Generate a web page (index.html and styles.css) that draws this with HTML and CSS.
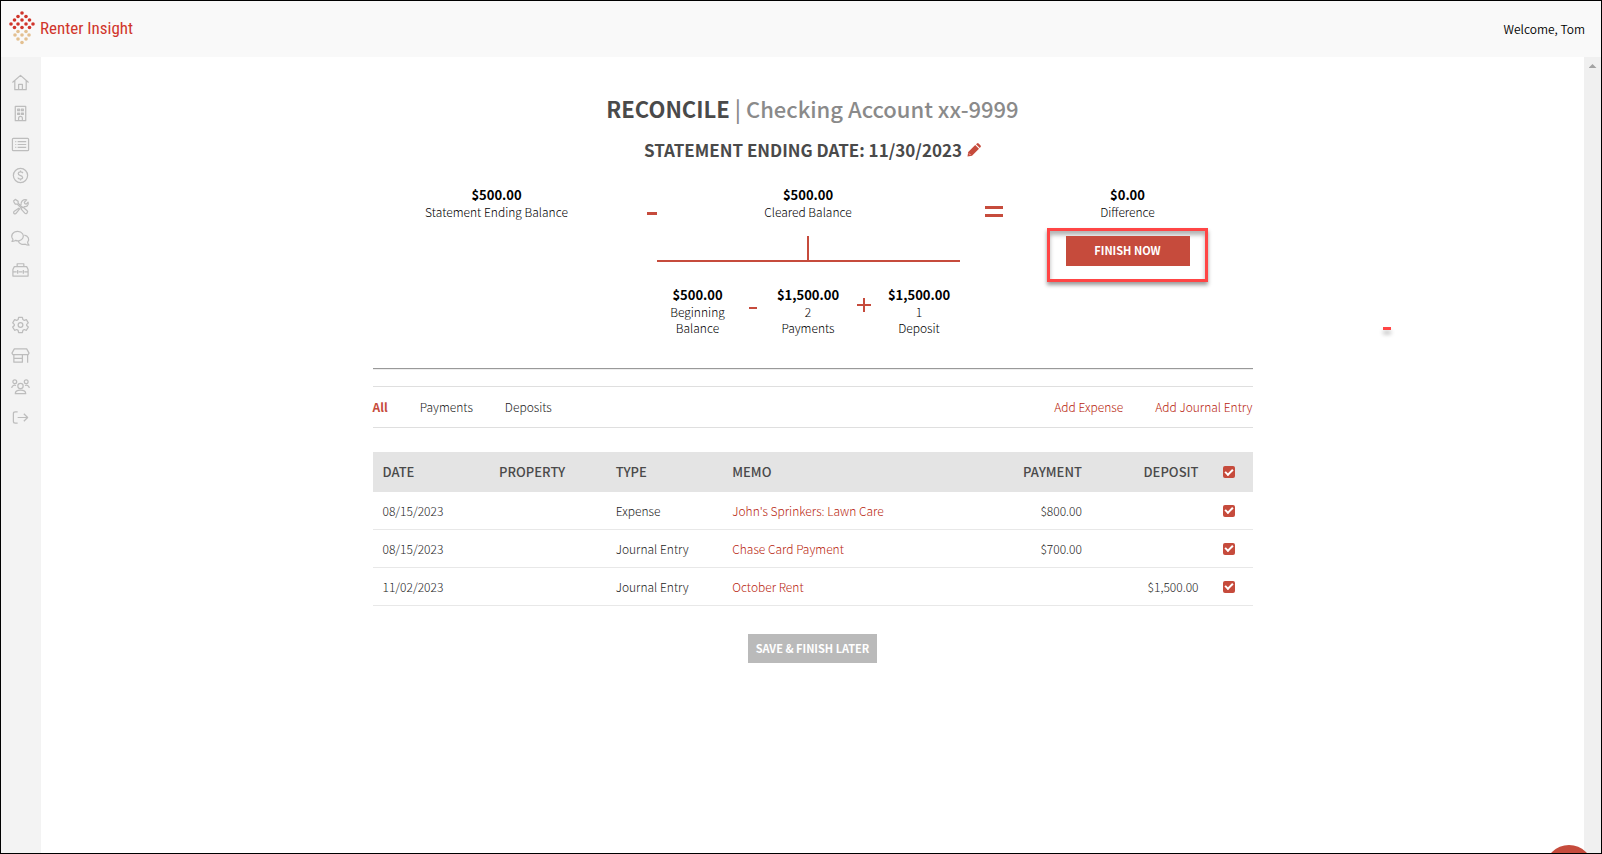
FILE: index.html
```html
<!DOCTYPE html>
<html lang="en">
<head>
<meta charset="utf-8">
<title>Renter Insight - Reconcile</title>
<link rel="stylesheet" href="styles.css">
</head>
<body>
<header class="topbar">
  <a class="brand" href="#">
    <svg class="brand-mark" viewBox="0 0 26 34" width="26" height="34" aria-hidden="true">
      <g fill="#d0352b">
        <circle cx="13" cy="2" r="1.800"/><circle cx="9" cy="5.500" r="1.800"/><circle cx="17" cy="5.500" r="1.800"/>
        <circle cx="5.500" cy="9" r="1.800"/><circle cx="13" cy="9" r="1.800"/><circle cx="20.500" cy="9" r="1.800"/>
        <circle cx="2" cy="13" r="1.800"/><circle cx="9" cy="13" r="1.800"/><circle cx="17" cy="13" r="1.800"/><circle cx="24" cy="13" r="1.800"/>
        <circle cx="5.500" cy="16.500" r="1.800"/><circle cx="13" cy="16.500" r="1.800"/><circle cx="20.500" cy="16.500" r="1.800"/>
      </g>
      <g fill="#e3c091">
        <circle cx="9" cy="20.500" r="1.800"/><circle cx="17" cy="20.500" r="1.800"/>
        <circle cx="6" cy="24" r="1.800"/><circle cx="13" cy="24" r="1.800"/><circle cx="20" cy="24" r="1.800"/>
        <circle cx="9" cy="28" r="1.800"/><circle cx="17" cy="28" r="1.800"/><circle cx="13" cy="31.500" r="1.800"/>
      </g>
    </svg>
    <span class="brand-name">Renter Insight</span>
  </a>
  <span class="welcome">Welcome, Tom</span>
</header>
<div class="shell">
  <nav class="sidebar" aria-label="Main">
    <a href="#" aria-label="Home"><svg viewBox="0 0 20 20"><path d="M1.500 10 10 2.500 18.500 10M4 8v9.500h12V8M8 17.500v-5.500h4v5.500"/></svg></a>
    <a href="#" aria-label="Properties"><svg viewBox="0 0 20 20"><path d="M4.500 2.500h11v15h-11zM8 17.500v-2.500a2 2 0 0 1 4 0v2.500"/><path d="M7 5.500h2v1.500H7zM11 5.500h2v1.500h-2zM7 9.500h2V11H7zM11 9.500h2V11h-2z"/></svg></a>
    <a href="#" aria-label="Listings"><svg viewBox="0 0 20 20"><rect x="1.500" y="3.500" width="17" height="13" rx="1"/><path d="M4.500 7h1M4.500 10h1M4.500 13h1M7 7h9M7 10h9M7 13h9"/></svg></a>
    <a href="#" aria-label="Accounting"><svg viewBox="0 0 20 20"><circle cx="10" cy="10" r="7.500"/><path d="M12.500 7.500C12 6.500 11 6.300 10 6.300c-3 0-3.200 2.900-.5 3.500 3.600.8 3.600 3.900.5 3.900-1.500 0-2.500-.5-2.800-1.500M10 4.800v1.500M10 13.700v1.500"/></svg></a>
    <a href="#" aria-label="Maintenance"><svg viewBox="0 0 20 20"><path d="m2.500 4.500 2-2 3 2v2l4 4M2.500 4.500l2 3h2l4 4M11 12l1.500-1.500 4.500 4c1.500 1.500-1 4-2.500 2.500l-4-4.500zM8.500 11.500l-5 3.500c-2 1.500.5 4 2 2l4-5M10.500 8.500c-.6-4 2.500-6.500 6-5.500L14 5.500l.5 1.500 1.500.5 2-2c1 3-1.500 5.500-4.500 4.500"/></svg></a>
    <a href="#" aria-label="Messages"><svg viewBox="0 0 20 20"><path d="M1 14c1-1 1-2 1-2C-1 8 2 3.500 7 3.500S14 8 12.500 10.500C11 13.500 7 14 5 13c-1 .8-2.500 1.200-4 1zM14 7.500c4 .5 6 4.500 3.500 7.500 0 1 .5 2 1.500 3-1.500 0-3-.3-4-1-3 1-6.500-.3-7.300-3.200"/></svg></a>
    <a href="#" aria-label="Toolbox"><svg viewBox="0 0 20 20"><path d="M3.500 8h13l1.500 3v7H2v-7zM6.500 8V5h7v3M2 13.500h4M8 13.500h4M14 13.500h4M7 11.500v4M13 11.500v4"/></svg></a>
    <a class="group-start" href="#" aria-label="Settings"><svg viewBox="0 0 20 20"><path d="M8 2.500h4l.5 2.300 1.500.9 2.200-.8 2 3.400-1.700 1.600v1.200l1.700 1.600-2 3.400-2.200-.8-1.500.9-.5 2.300H8l-.5-2.300-1.500-.9-2.200.8-2-3.400 1.700-1.600V9.900L1.800 8.300l2-3.400 2.200.8 1.500-.9z"/><circle cx="10" cy="10.500" r="2.500"/></svg></a>
    <a href="#" aria-label="Marketplace"><svg viewBox="0 0 20 20"><path d="M3.500 3h13L19 7.500 18 9H2L1 7.500zM3 9v8h9V9M3 13h9M17.500 9v8.500"/></svg></a>
    <a href="#" aria-label="People"><svg viewBox="0 0 20 20"><circle cx="10" cy="9.500" r="2.800"/><circle cx="4" cy="5" r="2"/><circle cx="16" cy="5" r="2"/><path d="M4.500 17.500c0-5 11-5 11 0zM.800 11.500c0-2 2-3.500 4.500-2.500M19.200 11.500c0-2-2-3.500-4.500-2.500"/></svg></a>
    <a href="#" aria-label="Log out"><svg viewBox="0 0 20 20"><path d="M7 4H4.500C3 4 2.500 4.500 2.500 6v8c0 1.500.5 2 2 2H7M7 10h10.500M13.500 6l4 4-4 4"/></svg></a>
  </nav>
  <main class="content">
    <div class="page">
      <h1 class="title">RECONCILE <span class="account">| Checking Account xx-9999</span></h1>
      <h2 class="subtitle">STATEMENT ENDING DATE: 11/30/2023
        <button class="edit" type="button" aria-label="Edit statement date"><svg viewBox="0 0 14 14" width="14" height="14"><path d="M1.200 9 8.200 2l3.800 3.800-7 7-4.500.7zM9 1.200 10 .4q.8-.6 1.600 0L13.600 2.400q.6.800 0 1.600l-.8 1z" fill="#c64b3c"/><path d="m2 10.500 1.500 1.500" stroke="#fff" stroke-width=".7"/></svg></button>
      </h2>
      <section class="equation">
        <div class="term"><strong>$500.00</strong><span>Statement Ending Balance</span></div>
        <i class="op minus"></i>
        <div class="cleared">
          <div class="term"><strong>$500.00</strong><span>Cleared Balance</span></div>
          <div class="stem"></div>
          <div class="parts">
            <div class="term"><strong>$500.00</strong><span>Beginning</span><span>Balance</span></div>
            <i class="op minus-small"></i>
            <div class="term"><strong>$1,500.00</strong><span>2</span><span>Payments</span></div>
            <i class="op plus"></i>
            <div class="term"><strong>$1,500.00</strong><span>1</span><span>Deposit</span></div>
          </div>
        </div>
        <i class="op equals"></i>
        <div class="term">
          <strong>$0.00</strong><span>Difference</span>
          <div class="finish"><button class="btn primary" type="button">FINISH NOW</button></div>
        </div>
      </section>
      <hr class="rule">
      <div class="filters">
        <a class="active" href="#">All</a><a href="#">Payments</a><a href="#">Deposits</a>
        <a class="link push" href="#">Add Expense</a><a class="link" href="#">Add Journal Entry</a>
      </div>
      <table class="ledger">
        <colgroup><col class="c"><col class="c"><col class="c"><col><col class="c"><col class="c"><col class="tick"></colgroup>
        <thead>
          <tr><th>DATE</th><th>PROPERTY</th><th>TYPE</th><th>MEMO</th><th class="num">PAYMENT</th><th class="num">DEPOSIT</th><th class="check"><input type="checkbox" checked aria-label="Select all"></th></tr>
        </thead>
        <tbody>
          <tr><td>08/15/2023</td><td></td><td>Expense</td><td><a class="link" href="#">John's Sprinkers: Lawn Care</a></td><td class="num">$800.00</td><td></td><td class="check"><input type="checkbox" checked aria-label="John's Sprinkers: Lawn Care"></td></tr>
          <tr><td>08/15/2023</td><td></td><td>Journal Entry</td><td><a class="link" href="#">Chase Card Payment</a></td><td class="num">$700.00</td><td></td><td class="check"><input type="checkbox" checked aria-label="Chase Card Payment"></td></tr>
          <tr><td>11/02/2023</td><td></td><td>Journal Entry</td><td><a class="link" href="#">October Rent</a></td><td></td><td class="num">$1,500.00</td><td class="check"><input type="checkbox" checked aria-label="October Rent"></td></tr>
        </tbody>
      </table>
      <button class="btn later" type="button">SAVE &amp; FINISH LATER</button>
    </div>
    <i class="dash"></i>
  </main>
  <div class="scrollbar"></div>
</div>
<button class="fab" type="button" aria-label="Help"></button>
</body>
</html>
```
FILE: styles.css
```css
* { box-sizing: border-box; }

body {
  margin: 0;
  height: 100vh;
  display: flex;
  flex-direction: column;
  position: relative;
  overflow: hidden;
  border: 1px solid #000;
  background: #fff;
  color: #1c1c1c;
  font: 300 12px/16px "Noto Sans CJK SC", "Open Sans", sans-serif;
}

a { color: inherit; text-decoration: none; }
button { font: inherit; border: 0; padding: 0; cursor: pointer; }

.topbar {
  flex: none;
  height: 56px;
  display: flex;
  align-items: center;
  justify-content: space-between;
  padding: 0 16px 0 8px;
  background: #f9f9f9;
}
.brand { display: flex; align-items: center; gap: 5px; margin-bottom: 2px; }
.brand-name {
  font: 17px/24px "Liberation Sans Narrow", "Roboto Condensed", "Liberation Sans", sans-serif;
  color: #d0352b;
}
.welcome { color: #000; font-weight: 350; }

.shell { flex: 1; min-height: 0; display: flex; }

.sidebar {
  flex: none;
  width: 40px;
  padding: 10px 1px 0 0;
  background: #f3f3f3;
  display: flex;
  flex-direction: column;
}
.sidebar a { height: 31px; display: grid; place-items: center; }
.sidebar .group-start { margin-top: 25px; }
.sidebar svg {
  width: 19px;
  height: 19px;
  fill: none;
  stroke: #bdbdbd;
  stroke-width: 1.3;
  stroke-linejoin: round;
  overflow: visible;
}

.content { flex: 1; position: relative; overflow: hidden; }
.page { max-width: 880px; margin: 0 auto; padding-top: 34px; }

.scrollbar { flex: none; width: 17px; background: #f0f0f0; }
.scrollbar::before {
  content: "";
  display: block;
  margin: 7px auto 0;
  width: 8px;
  height: 4px;
  background: #a3a3a3;
  clip-path: polygon(50% 0, 100% 100%, 0 100%);
}

.title {
  margin: 0;
  text-align: center;
  color: #4a4a4a;
  font-size: 22px;
  line-height: 34px;
  font-weight: 700;
}
.account { color: #8a8a8a; font-weight: 500; }
.subtitle {
  margin: 13px 0 0;
  display: flex;
  justify-content: center;
  align-items: center;
  gap: 5px;
  color: #4a4a4a;
  font-size: 17px;
  line-height: 24px;
  font-weight: 700;
}
.edit { background: none; display: flex; }

.equation {
  margin-top: 24px;
  display: grid;
  grid-template-columns: 248fr 36fr 303fr 43fr 250fr;
  color: #000;
}
.term { text-align: center; }
.term strong, .term span { display: block; }
.term strong { font-size: 13px; line-height: 18px; font-weight: 700; }

.op { justify-self: end; background: #c64b3c; }
.minus { width: 10px; height: 3px; margin-top: 26px; }
.equals {
  width: 18px;
  height: 11px;
  margin-top: 20px;
  background: none;
  border: solid #c64b3c;
  border-width: 3px 0;
}
.minus-small, .plus { justify-self: center; }
.minus-small { width: 8px; height: 2px; margin-top: 21px; }
.plus {
  width: 14px;
  height: 14px;
  margin-top: 12px;
  background:
    linear-gradient(#c64b3c, #c64b3c) center / 100% 2px no-repeat,
    linear-gradient(#c64b3c, #c64b3c) center / 2px 100% no-repeat;
}
.stem {
  height: 26px;
  margin-top: 16px;
  border-bottom: 2px solid #c64b3c;
  background: linear-gradient(#c64b3c, #c64b3c) center / 2px 100% no-repeat;
}
.parts {
  margin-top: 24px;
  display: grid;
  grid-template-columns: 82fr 29fr 81fr 30fr 81fr;
}
.finish {
  width: 161px;
  height: 54px;
  margin: 8px auto 0;
  padding-top: 5px;
  border: 3px solid #ff4545;
  box-shadow: 0 3px 4px rgba(0, 0, 0, .4), inset 0 4px 4px rgba(0, 0, 0, .3);
}
.btn { color: #fff; font-size: 11px; line-height: 16px; font-weight: 700; }
.primary { width: 124px; height: 30px; padding-bottom: 2px; background: #c64b3c; }
.later {
  display: block;
  margin: 28px auto 0;
  padding: 6px 8px 7px;
  background: #bababa;
}

.rule {
  height: 2px;
  margin: 32px 0 16px;
  border: solid #999;
  border-width: 1px 0 0;
  background: #eee;
}
.filters {
  height: 42px;
  display: flex;
  align-items: center;
  gap: 32px;
  border: solid #dfdfdf;
  border-width: 1px 0;
}
.active { color: #c64b3c; font-weight: 700; }
.link { color: #b81e0e; }
.push { margin-left: auto; }

.ledger {
  width: 100%;
  margin-top: 24px;
  table-layout: fixed;
  border-collapse: separate;
  border-spacing: 0;
}
.c { width: 13.25%; }
.tick { width: 5%; }
.ledger th {
  height: 40px;
  padding: 0 10px;
  background: #e4e4e4;
  color: #4a4a4a;
  text-align: left;
  font-size: 13px;
  font-weight: 500;
}
.ledger td { height: 38px; padding: 0 10px; border-bottom: 1px solid #e8e8e8; }
.ledger .num { text-align: right; }
.ledger .check { padding: 0 0 0 14px; }

.check input {
  appearance: none;
  display: grid;
  place-items: center;
  width: 12px;
  height: 12px;
  margin: 0;
  border-radius: 2px;
  background: #ccc;
}
.check input:checked { background: #c64b3c; }
.check input:checked::after {
  content: "";
  width: 6px;
  height: 3px;
  margin-bottom: 2px;
  border: solid #fff;
  border-width: 0 0 2px 2px;
  transform: rotate(-45deg);
}

.dash {
  position: absolute;
  left: 87%;
  top: 270px;
  width: 8px;
  height: 3px;
  background: #ff4545;
  box-shadow: 0 4px 4px rgba(0, 0, 0, .3);
}
.fab {
  position: absolute;
  right: 8px;
  bottom: -40px;
  width: 48px;
  height: 48px;
  border-radius: 50%;
  background: #c64b3c;
}
```
